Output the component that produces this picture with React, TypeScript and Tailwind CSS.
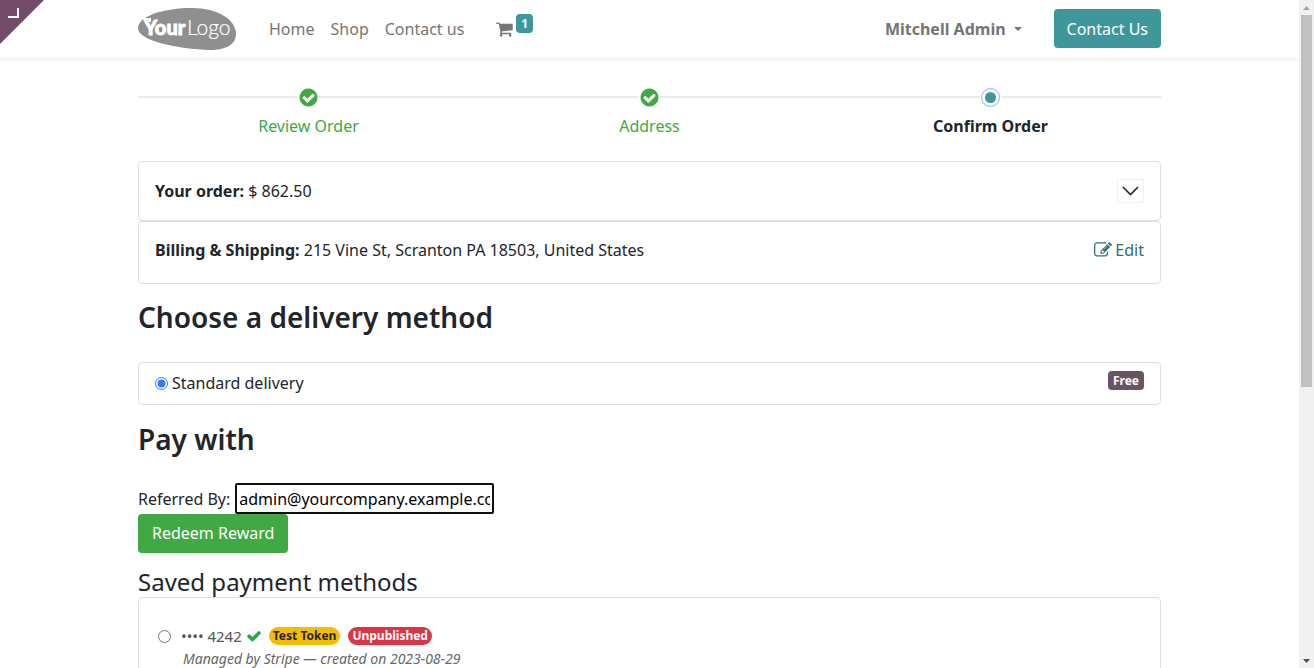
import type { ReactNode } from "react";

function Glyph({ d, className }: { d: string; className: string }) {
  return (
    <svg viewBox="0 0 1792 1792" fill="currentColor" aria-hidden="true" className={className}>
      <path d={d} />
    </svg>
  );
}

const CART =
  "M640 1536q0 52-38 90t-90 38-90-38-38-90 38-90 90-38 90 38 38 90zm896 0q0 52-38 90t-90 38-90-38-38-90 38-90 90-38 90 38 38 90zm128-1088v512q0 24-16.5 42.5t-40.5 21.5l-1044 122q13 60 13 70 0 16-24 64h920q26 0 45 19t19 45-19 45-45 19h-1024q-26 0-45-19t-19-45q0-11 8-31.5t16-36 21.5-40 15.5-29.5l-177-823h-204q-26 0-45-19t-19-45 19-45 45-19h256q16 0 28.5 6.5t19.5 15.5 13 24.5 8 26 5.5 29.5 4.5 26h1201q26 0 45 19t19 45z";
const CHECK =
  "M1671 566q0 40-28 68l-724 724-136 136q-28 28-68 28t-68-28l-136-136-362-362q-28-28-28-68t28-68l136-136q28-28 68-28t68 28l294 295 656-657q28-28 68-28t68 28l136 136q28 28 28 68z";
const CHECK_CIRCLE =
  "M1412 734q0-28-18-46l-91-90q-19-19-45-19t-45 19l-408 407-226-226q-19-19-45-19t-45 19l-91 90q-18 18-18 46 0 27 18 45l362 362q19 19 45 19 27 0 46-19l543-543q18-18 18-45zm252 162q0 209-103 385.5t-279.5 279.5-385.5 103-385.5-103-279.5-279.5-103-385.5 103-385.5 279.5-279.5 385.5-103 385.5 103 279.5 279.5 103 385.5z";
const PENCIL_SQUARE =
  "M888 1184l116-116-152-152-116 116v56h96v96h56zm440-720q-16-16-33 1l-350 350q-17 17-1 33t33-1l350-350q17-17 1-33zm80 594v190q0 119-84.5 203.5t-203.5 84.5h-832q-119 0-203.5-84.5t-84.5-203.5v-832q0-119 84.5-203.5t203.5-84.5h832q63 0 117 25 15 7 18 23 3 17-9 29l-49 49q-14 14-32 8-23-6-45-6h-832q-66 0-113 47t-47 113v832q0 66 47 113t113 47h832q66 0 113-47t47-113v-126q0-13 9-22l64-64q15-15 35-7t20 29zm-96-738l288 288-672 672h-288v-288zm444 132l-92 92-288-288 92-92q28-28 68-28t68 28l152 152q28 28 28 68t-28 68z";

function Logo() {
  return (
    <svg viewBox="0 0 98 42" role="img" aria-label="Your Logo" className="h-[42px] w-[98px]">
      <path
        d="M0 20C0 8 26 0 54 0C80 0 98 12 98 26C98 37 87 42 72 42C40 41 0 33 0 20Z"
        fill="#8f8f8f"
      />
      <path d="M4 10H13V14H8Z" fill="#fff" />
      <text x="6" y="27" fontFamily="Lato" fontWeight="900" fontSize="20" fill="#fff" stroke="#fff" strokeWidth="0.9">
        Your
      </text>
      <text x="49" y="27" fontFamily="Lato" fontWeight="300" fontSize="21" fill="#fff" stroke="#fff" strokeWidth="0.2">
        Logo
      </text>
    </svg>
  );
}

function Header() {
  return (
    <header className="relative bg-white shadow-[0_2px_4px_rgba(0,0,0,0.075)]">
      <div className="mx-auto flex h-[58px] max-w-[1023px] items-center">
        <a href="#home" className="mr-[33px] shrink-0">
          <Logo />
        </a>
        <nav className="flex items-center gap-4 text-[#757575]">
          <a href="#home">Home</a>
          <a href="#shop">Shop</a>
          <a href="#contact">Contact us</a>
          <a href="#cart" aria-label="Cart, 1 item" className="ml-4 flex items-center">
            <Glyph d={CART} className="size-[18px]" />
            <span className="mb-3 ml-0.5 rounded bg-[#3f979b] px-[5px] text-xs leading-[19px] font-bold text-white">
              1
            </span>
          </a>
        </nav>
        <button type="button" className="ml-auto flex items-center gap-2 font-bold text-[#757575]">
          Mitchell Admin
          <svg viewBox="0 0 8 4" aria-hidden="true" className="h-1 w-2">
            <path d="M0 0H8L4 4Z" fill="currentColor" />
          </svg>
        </button>
        <a
          href="#contact"
          className="mb-px ml-8 rounded bg-[#3f979b] px-[13px] pt-px text-base leading-[38px] text-white"
        >
          Contact Us
        </a>
      </div>
      <button type="button" aria-label="Open backend menu" className="absolute top-0 left-0 size-11">
        <svg viewBox="0 0 44 44" aria-hidden="true" className="size-11">
          <path d="M0 0H44L0 44Z" fill="#714b67" />
          <path d="M8 17H18V8" fill="none" stroke="#fff" strokeWidth="2" />
        </svg>
      </button>
    </header>
  );
}

function Step({ label, current = false }: { label: string; current?: boolean }) {
  return (
    <li className="flex flex-1 flex-col items-center">
      <div className="flex h-5 w-full items-center">
        <span className="h-0.5 flex-1 bg-[#e9ecef]" />
        {current ? (
          <span className="mx-px flex size-[19px] items-center justify-center rounded-full border border-[#7fc1c4] bg-white">
            <span className="size-[11px] rounded-full bg-[#3f979b]" />
          </span>
        ) : (
          <Glyph d={CHECK_CIRCLE} className="size-[21px] text-[#40a944]" />
        )}
        <span className="h-0.5 flex-1 bg-[#e9ecef]" />
      </div>
      {current ? (
        <span className="mt-[7px] font-bold text-[#212529]" aria-current="step">
          {label}
        </span>
      ) : (
        <a href="#step" className="mt-[7px] text-[#40a944]">
          {label}
        </a>
      )}
    </li>
  );
}

function Card({ className, children }: { className: string; children: ReactNode }) {
  return <section className={`rounded border border-[#dfdfdf] px-4 ${className}`}>{children}</section>;
}

function Scrollbar() {
  return (
    <div aria-hidden="true" className="flex w-[15px] shrink-0 flex-col items-center justify-between bg-[#f1f1f1]">
      <div className="flex min-h-0 w-full flex-1 flex-col items-center">
        <svg viewBox="0 0 15 15" className="size-[15px] shrink-0">
          <path d="M4 10H11L7.500 6Z" fill="#a3a3a3" />
        </svg>
        <div className="h-[57%] w-[11px] bg-[#c1c1c1]" />
      </div>
      <svg viewBox="0 0 15 15" className="size-[15px] shrink-0">
        <path d="M4 6H11L7.500 10Z" fill="#505050" />
      </svg>
    </div>
  );
}

export default function App() {
  return (
    <div className="flex h-screen overflow-hidden bg-white font-['Noto_Sans',sans-serif] text-base leading-6 text-[#212529]">
      <div className="min-w-0 flex-1 overflow-hidden">
        <Header />
        <main className="mx-auto max-w-[1023px] pt-[29px]">
          <ol className="flex">
            <Step label="Review Order" />
            <Step label="Address" />
            <Step label="Confirm Order" current />
          </ol>

          <Card className="mt-[23px] flex h-[60px] items-center justify-between">
            <p>
              <b>Your order:</b> $ 862.50
            </p>
            <button
              type="button"
              aria-label="Show order details"
              className="flex h-6 w-[27px] items-center justify-center rounded-xs border border-[#eeeeee]"
            >
              <svg viewBox="0 0 17 10" fill="none" aria-hidden="true" className="h-[10px] w-[17px]">
                <path d="M1 1L8.500 8.500L16 1" stroke="#212529" strokeWidth="1.600" />
              </svg>
            </button>
          </Card>
          <Card className="flex justify-between pt-4 pb-[21px]">
            <p>
              <b>Billing &amp; Shipping:</b> 215 Vine St, Scranton PA 18503, United States
            </p>
            <a href="#edit" className="flex items-center gap-[3px] text-[#2f7073]">
              <Glyph d={PENCIL_SQUARE} className="size-[18px]" />
              Edit
            </a>
          </Card>

          <h3 className="mt-4 text-[28px] leading-[34px] font-semibold">Choose a delivery method</h3>
          <Card className="mt-7 flex items-start justify-between py-2">
            <label className="flex items-center gap-1 leading-[25px]">
              <input type="radio" name="delivery" defaultChecked className="size-[13px] accent-[#3478ff]" />
              Standard delivery
            </label>
            <span className="rounded bg-[#685563] px-[5px] text-xs leading-[19px] font-bold text-white">
              Free
            </span>
          </Card>

          <h3 className="mt-[17px] text-[28px] leading-[34px] font-semibold">Pay with</h3>
          <div className="mt-[27px] flex h-[31px] items-center gap-[5px]">
            <label htmlFor="referrer">Referred By:</label>
            <input
              id="referrer"
              type="text"
              defaultValue="admin@yourcompany.example.com"
              className="h-[31px] w-[259px] rounded-xs border-2 border-[#101010] bg-white px-0.5 text-black outline-none"
            />
          </div>
          <button type="button" className="block rounded bg-[#40a944] px-[14px] leading-[39px] text-white">
            Redeem Reward
          </button>

          <h4 className="mt-[14px] text-2xl leading-[30px]">Saved payment methods</h4>
          <Card className="pt-7 pb-8 text-[15px] leading-5">
            <div className="flex items-center pl-[3px] text-[#555555]">
              <label className="flex items-center gap-[10px]">
                <input type="radio" name="token" className="size-[13px]" />
                •••• 4242
              </label>
              <Glyph d={CHECK} className="ml-1 size-4 text-[#28a745]" />
              <span className="ml-[7px] rounded-full bg-[#f5bd02] px-1 text-xs leading-[18px] font-bold text-[#212529]">
                Test Token
              </span>
              <span className="ml-2 rounded-full bg-[#dc3545] px-1 text-xs leading-[18px] font-bold text-white">
                Unpublished
              </span>
            </div>
            <p className="mt-[3px] ml-7 text-sm leading-5 text-[#666666] italic">
              Managed by Stripe — created on 2023-08-29
            </p>
          </Card>
        </main>
      </div>
      <Scrollbar />
    </div>
  );
}
